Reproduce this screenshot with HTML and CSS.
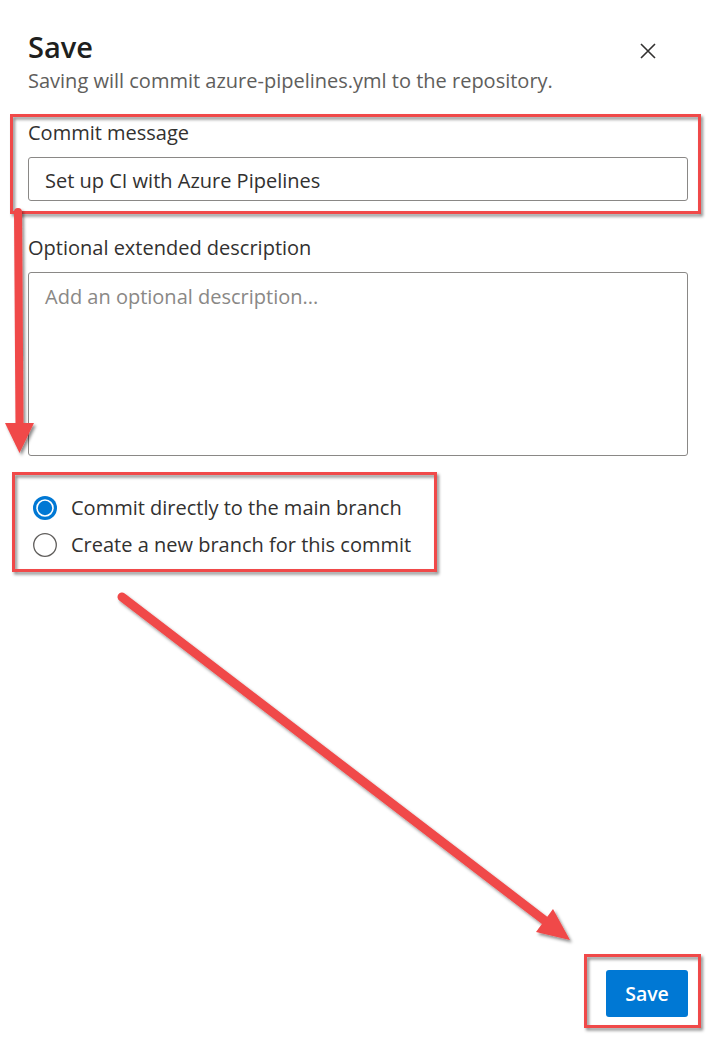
FILE: index.html
```html
<!DOCTYPE html>
<html lang="en">
<head>
<meta charset="utf-8">
<title>Save</title>
<link rel="stylesheet" href="styles.css">
</head>
<body>
<div class="dialog">
  <div class="header">
    <div class="titles">
      <h1 class="title">Save</h1>
      <p class="subtitle">Saving will commit azure-pipelines.yml to the repository.</p>
    </div>
    <button class="close" aria-label="Close">
      <svg width="16" height="16" viewBox="0 0 16 16"><path d="M1 1 L15 15 M15 1 L1 15" stroke="#323130" stroke-width="1.6" fill="none"/></svg>
    </button>
  </div>

  <label class="label first">Commit message</label>
  <div class="input">Set up CI with Azure Pipelines</div>

  <label class="label second">Optional extended description</label>
  <div class="textarea"><span class="placeholder">Add an optional description...</span></div>

  <div class="radios">
    <div class="radio-row">
      <svg class="radio" width="26" height="26" viewBox="0 0 26 26"><circle cx="13" cy="13" r="12" fill="#0078d4"/><circle cx="13" cy="13" r="8" fill="none" stroke="#ffffff" stroke-width="1.6"/></svg>
      <span>Commit directly to the main branch</span>
    </div>
    <div class="radio-row">
      <svg class="radio" width="26" height="26" viewBox="0 0 26 26"><circle cx="13" cy="13" r="11.3" fill="#ffffff" stroke="#605e5c" stroke-width="1.3"/></svg>
      <span>Create a new branch for this commit</span>
    </div>
  </div>

  <div class="footer">
    <button class="primary">Save</button>
  </div>
</div>

<svg class="annotations" width="717" height="1038" viewBox="0 0 717 1038">
  <defs>
    <filter id="sh" x="-10%" y="-10%" width="130%" height="130%">
      <feDropShadow dx="2" dy="2.5" stdDeviation="1.4" flood-color="#000" flood-opacity="0.45"/>
    </filter>
  </defs>
  <g filter="url(#sh)" fill="none" stroke="#f04848" stroke-width="3">
    <rect x="11.5" y="115.5" width="688" height="97"/>
    <rect x="13.5" y="473.5" width="422" height="97"/>
    <rect x="585.5" y="955.5" width="114" height="71"/>
  </g>
  <g filter="url(#sh)">
    <line x1="18" y1="212" x2="19.5" y2="426" stroke="#f04848" stroke-width="8" stroke-linecap="round"/>
    <polygon points="5,423 34,423 19.5,453" fill="#f04848"/>
    <line x1="122" y1="597" x2="548" y2="923" stroke="#f04848" stroke-width="9" stroke-linecap="round"/>
    <polygon points="536,932 553,909 570,940" fill="#f04848"/>
  </g>
</svg>
</body>
</html>
```

FILE: styles.css
```css
* { box-sizing: border-box; }

html, body {
  margin: 0;
  padding: 0;
  background: #ffffff;
}

body {
  font-family: "Open Sans", "Noto Sans", sans-serif;
  color: #323130;
  width: 717px;
  height: 1038px;
  overflow: hidden;
  position: relative;
}

.dialog {
  display: flex;
  flex-direction: column;
  height: 1038px;
  padding: 29px 29px 21px 28px;
}

.header {
  display: flex;
  justify-content: space-between;
  align-items: flex-start;
}

.title {
  margin: 0;
  font-size: 29px;
  line-height: 36px;
  font-weight: 600;
  color: #201f1e;
}

.subtitle {
  margin: 3px 0 0;
  font-size: 20px;
  line-height: 26px;
  color: #605e5c;
}

.close {
  border: 0;
  background: none;
  padding: 0;
  margin: 14px 32px 0 0;
  width: 16px;
  height: 16px;
  display: flex;
}

.label {
  display: block;
  font-size: 20px;
  line-height: 26px;
  color: #323130;
}

.label.first { margin-top: 26px; }
.label.second { margin-top: 34px; }

.input {
  margin-top: 11px;
  height: 44px;
  border: 1px solid #8a8886;
  border-radius: 3px;
  padding: 3px 16px 0;
  display: flex;
  align-items: center;
  font-size: 20px;
  color: #323130;
}

.textarea {
  margin-top: 11px;
  height: 184px;
  border: 1px solid #8a8886;
  border-radius: 3px;
  padding: 11px 16px;
  font-size: 20px;
  line-height: 26px;
}

.placeholder { color: #8a8886; }

.radios {
  margin-top: 33px;
  display: flex;
  flex-direction: column;
}

.radio-row {
  height: 37px;
  display: flex;
  align-items: center;
  gap: 13px;
  padding-left: 4px;
  font-size: 20px;
  color: #323130;
}

.radio { flex: none; }

.footer {
  margin-top: auto;
  display: flex;
  justify-content: flex-end;
}

.primary {
  width: 82px;
  height: 47px;
  border: 0;
  border-radius: 3px;
  background: #0078d4;
  color: #ffffff;
  font-family: "Open Sans", "Noto Sans", sans-serif;
  font-size: 19.5px;
  font-weight: 600;
  padding: 0;
}

.annotations {
  position: absolute;
  left: 0;
  top: 0;
  pointer-events: none;
}
```
